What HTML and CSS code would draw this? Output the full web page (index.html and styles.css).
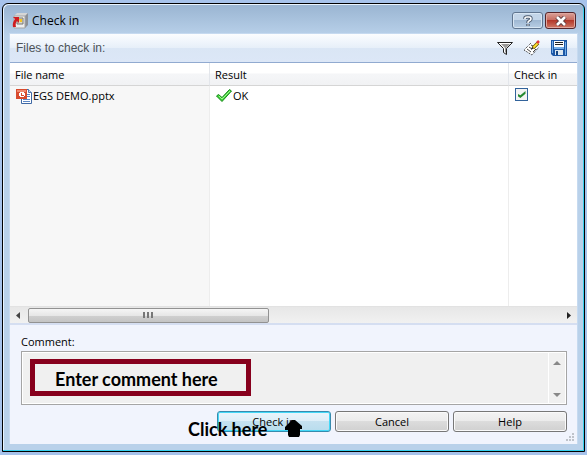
FILE: index.html
```html
<!DOCTYPE html>
<html lang="en">
<head>
<meta charset="utf-8">
<title>Check in</title>
<link rel="stylesheet" href="styles.css">
</head>
<body>
<main class="window">
  <header class="titlebar">
    <svg class="app-icon" width="16" height="16" viewBox="0 0 16 16" aria-hidden="true">
      <path d="M2 3L5 0H16L13 3Z" fill="#d6d6d6"/>
      <path d="M13 3L16 0V12L13 15Z" fill="#8c9097"/>
      <path d="M2 3H13V15H2Z" fill="#eee" stroke="#a5a5a5"/>
      <path d="M5 5H11V11H5Z" fill="#dcd8c8" stroke="#777"/>
      <path d="M7 6H10V9H8Z" fill="#f6c51c"/>
      <path d="M1 4H7V10L5 8Q3 10 4 14H1Q0 10 3 6Z" fill="#cf1d20"/>
    </svg>
    <h1 class="title">Check in</h1>
    <button class="caption-button" type="button" aria-label="Help">
      <svg width="10" height="12" viewBox="0 0 10 12"><path d="M2 4V3Q2 2 4 2H6Q8 2 8 4Q8 5 6 6Q5 6 5 8M5 9V11" fill="none" stroke="#4d5c70" stroke-width="3.400"/><path d="M2 4V3Q2 2 4 2H6Q8 2 8 4Q8 5 6 6Q5 6 5 8M5 9.500V10.500" fill="none" stroke="#fff" stroke-width="1.600"/></svg>
    </button>
    <button class="caption-button caption-close" type="button" aria-label="Close">
      <svg width="12" height="10" viewBox="0 0 12 10"><path d="M2 1L10 9M10 1L2 9" stroke="#5c3a3d" stroke-width="4.500"/><path d="M2 1L10 9M10 1L2 9" stroke="#fff" stroke-width="2.600"/></svg>
    </button>
  </header>
  <div class="client">
    <div class="toolbar">
      <span class="toolbar-label">Files to check in:</span>
      <button class="tool" type="button" aria-label="Filter">
        <svg width="16" height="16" viewBox="0 0 16 16"><path d="M0.500 2.500H15.500L9.500 8.500V14.500L6.500 12.500V8.500Z" fill="#fff" stroke="#222"/><path d="M4 4H13L9 8V13L8 12V8Z" fill="#999"/></svg>
      </button>
      <button class="tool" type="button" aria-label="Edit properties">
        <svg width="16" height="16" viewBox="0 0 16 16"><path d="M7 3L14 7L8 15L0 10Z" fill="#fff"/><path d="M7 3L0 10L8 15L15 7" fill="none" stroke="#222" stroke-dasharray="1 1"/><path d="M3 9L7 12M5 7L8 9M7 5L9 6M9 12L12 9" stroke="#444"/><path d="M9 8L14 3" stroke="#665000" stroke-width="3.400"/><path d="M9 8L14 3" stroke="#ffe32b" stroke-width="1.800"/><path d="M13 3L15 1" stroke="#e33737" stroke-width="2.500"/><path d="M8 7L7 10L10 8Z" fill="#222"/></svg>
      </button>
      <button class="tool" type="button" aria-label="Save">
        <svg width="16" height="16" viewBox="0 0 16 16"><path d="M0 0H16V16H2L0 14Z" fill="#1d57a5"/><path d="M1 1H2V13H1ZM14 2H15V15H14Z" fill="#75aee8"/><path d="M3 1H13V7H3Z" fill="#fff"/><path d="M4 2.500H12M4 4.500H12" stroke="#222"/><path d="M3 7H13V9H3Z" fill="#75aee8"/><path d="M4 10H12V15H4Z" fill="#dce7ef"/><path d="M5 11H7V15H5Z" fill="#174784"/></svg>
      </button>
    </div>
    <div class="list">
      <table class="files">
        <colgroup><col class="col-name"><col><col class="col-check"></colgroup>
        <thead><tr><th>File name</th><th>Result</th><th>Check in</th></tr></thead>
        <tbody>
          <tr class="file">
            <td><span class="cell"><svg width="16" height="16" viewBox="0 0 16 16" aria-hidden="true"><path d="M5.500 1.500H12.500L15.500 4.500V15.500H5.500Z" fill="#fff" stroke="#3f69a5"/><path d="M12.500 1.500V4.500H15.500" fill="#c8dcf3" stroke="#5277ad"/><path d="M10 6.500H14M10 8.500H14M7 11.500H14M7 13.500H14" stroke="#5c87c5"/><path d="M0 1H11V11H0Z" fill="#d84b2e"/><path d="M1 2H10V4H1Z" fill="#f08a70"/><path d="M4 4H8V5H9V8H8V9H4V8H3V5H4Z" fill="#fff"/><path d="M5 5H6V7H8V8H5Z" fill="#d84b2e"/></svg>EGS DEMO.pptx</span></td>
            <td><span class="cell"><svg width="16" height="16" viewBox="0 0 16 16" aria-hidden="true"><path d="M0.500 8L2.500 6.500L6 9.500L13.500 1.500L15.500 3L6 13.500Z" fill="#42d73b" stroke="#16861a"/><path d="M3 8L6 11L14 3" fill="none" stroke="#a1f58e"/></svg>OK</span></td>
            <td><input class="check" type="checkbox" checked aria-label="Check in EGS DEMO.pptx"></td>
          </tr>
          <tr><td></td><td></td><td></td></tr>
        </tbody>
      </table>
    </div>
    <div class="scrollbar" aria-hidden="true">
      <svg width="16" height="15" viewBox="0 0 16 15"><path d="M10 4V11L6 7.500Z" fill="#444"/></svg>
      <div class="track"><div class="thumb"><i></i><i></i><i></i></div></div>
      <svg width="16" height="15" viewBox="0 0 16 15"><path d="M6 4V11L10 7.500Z" fill="#222"/></svg>
    </div>
    <form class="footer">
      <label class="comment-label" for="comment">Comment:</label>
      <div class="comment-box">
        <textarea class="comment" id="comment"></textarea>
        <div class="vertical-scroll" aria-hidden="true">
          <svg width="8" height="4" viewBox="0 0 8 4"><path d="M4 0L8 4H0Z" fill="#888"/></svg>
          <svg width="8" height="4" viewBox="0 0 8 4"><path d="M0 0H8L4 4Z" fill="#888"/></svg>
        </div>
        <strong class="note note-comment">Enter comment here</strong>
      </div>
      <div class="actions">
        <div class="primary-action">
          <button class="button button-primary" type="button">Check in</button>
          <strong class="note note-click">Click here</strong>
          <svg class="pointer" width="20" height="18" viewBox="0 0 20 18" aria-hidden="true"><path d="M8 0H11L18 6V9H16V15L15 17H5L4 15V10H1V7Z" fill="#000"/></svg>
        </div>
        <button class="button" type="button">Cancel</button>
        <button class="button" type="button">Help</button>
      </div>
      <svg class="grip" width="10" height="10" viewBox="0 0 10 10" aria-hidden="true"><path d="M7 0H9V2H7ZM4 3H6V5H4ZM7 3H9V5H7ZM1 6H3V8H1ZM4 6H6V8H4ZM7 6H9V8H7Z" fill="#bfc3ca"/></svg>
    </form>
  </div>
</main>
</body>
</html>
```
FILE: styles.css
```css
* { box-sizing: border-box; }
body {
  margin: 0;
  padding: 3px 2px;
  height: 100vh;
  background: #a7c3eb;
  color: #000;
  font: 11px/16px "Open Sans", sans-serif;
}
button, textarea { font: inherit; color: inherit; }
svg { display: block; flex: none; }
.window {
  display: flex;
  flex-direction: column;
  height: 100%;
  padding: 0 6px 7px;
  border: 1px solid #000;
  border-radius: 6px 6px 0 0;
  background: linear-gradient(#99b4d1, #b9d1ea 32px);
  box-shadow: inset -1px -1px #35d0ee, inset 1px 1px #e8f4ff;
}
.titlebar {
  display: flex;
  align-items: center;
  height: 29px;
  padding: 4px 2px 0;
}
.app-icon { margin-left: 1px; }
.title {
  flex: 1;
  margin: 0 0 0 4px;
  font: 12px/16px "Open Sans", sans-serif;
}
.caption-button {
  display: grid;
  place-items: center;
  width: 31px;
  height: 17px;
  margin-left: 2px;
  padding: 0;
  border: 1px solid #60758f;
  border-radius: 3px;
  background: linear-gradient(#c3d5e8 50%, #9fb8d3 50%, #b8cee4);
  box-shadow: inset 0 0 0 1px #d8e6f3;
}
.caption-close {
  border-color: #55252a;
  background: linear-gradient(#d9a197, #c6695d 50%, #b3382a 50%, #cf7866);
  box-shadow: inset 0 0 0 1px #dfa79f;
}
.client {
  flex: 1;
  display: flex;
  flex-direction: column;
  min-height: 0;
  border: 1px solid #c6daf0;
  border-bottom: 0;
  background: #f1f4fd;
}
.toolbar {
  display: flex;
  align-items: center;
  gap: 11px;
  height: 29px;
  padding: 0 10px 0 6px;
  border-bottom: 1px solid #91aad0;
  background: linear-gradient(#fbfdff, #e6eff9 50%, #dae6f5 50%, #dce7f7);
}
.toolbar-label {
  flex: 1;
  color: #4d5257;
  font: 12px/16px "Liberation Sans", sans-serif;
}
.tool { padding: 0; border: 0; background: none; }
.list { flex: 1; min-height: 0; background: #fff; }
.files {
  width: 100%;
  height: 100%;
  border-collapse: separate;
  border-spacing: 0;
  table-layout: fixed;
}
.col-name { width: 200px; }
.col-check { width: 68px; }
th {
  height: 23px;
  padding: 2px 5px 0;
  border-right: 1px solid #e3e6eb;
  border-bottom: 1px solid #d5d5d5;
  background: linear-gradient(#fff 45%, #f5f6f8 50%, #f1f2f4);
  font-weight: normal;
  text-align: left;
}
td { padding: 0 5px; border-right: 1px solid #ededed; vertical-align: top; }
td:first-child { background: #f7f7f7; }
th:last-child, td:last-child { border-right: 0; }
.file { height: 20px; }
.file td { padding-top: 1px; }
.cell { display: flex; align-items: center; height: 18px; padding-left: 1px; gap: 1px; }
.check {
  appearance: none;
  display: grid;
  place-items: center;
  width: 13px;
  height: 13px;
  margin: 1px;
  border: 1px solid #32639b;
  background: #f4f4f4;
}
.check:checked::after {
  content: "";
  width: 8px;
  height: 7px;
  background: #258a31;
  clip-path: polygon(0 38%, 36% 60%, 100% 0, 100% 38%, 36% 100%, 0 70%);
}
.scrollbar {
  display: flex;
  align-items: center;
  height: 17px;
  border-top: 1px solid #e2e2e2;
  background: linear-gradient(#e7e7e7, #f1f1f1);
}
.track { flex: 1; }
.thumb {
  display: flex;
  justify-content: center;
  align-items: center;
  gap: 2px;
  width: 45%;
  height: 15px;
  margin-left: 2px;
  border: 1px solid #929292;
  border-radius: 2px;
  background: linear-gradient(#f5f5f5, #e7e7e7 50%, #cfcfcf 55%, #c4c4c4);
}
.thumb i { width: 2px; height: 6px; background: #777; }
.footer {
  position: relative;
  height: 121px;
  padding: 9px 10px 0 11px;
  border-top: 2px solid #d5def1;
  background: #f1f4fd;
}
.comment-label { display: block; height: 17px; }
.comment-box {
  position: relative;
  display: flex;
  height: 54px;
  padding: 1px;
  border: 1px solid #a5a5a5;
  background: #fff;
}
.comment { flex: 1; padding: 4px; border: 0; resize: none; background: #f0f0f0; }
.vertical-scroll {
  display: flex;
  flex-direction: column;
  justify-content: space-between;
  align-items: center;
  width: 17px;
  padding: 8px 0 6px;
  border-left: 1px solid #fff;
  background: #f0f0f0;
}
.note { position: absolute; font: bold 18px/20px Lato, sans-serif; white-space: nowrap; }
.note-comment {
  left: 8px;
  top: 7px;
  padding: 5px 28px 2px 20px;
  border: 5px solid #87001d;
}
.actions { display: flex; justify-content: flex-end; gap: 4px; margin-top: 6px; }
.primary-action { position: relative; }
.button {
  display: block;
  width: 114px;
  height: 21px;
  padding: 0;
  border: 1px solid #777;
  border-radius: 3px;
  background: linear-gradient(#f3f3f3, #ebebeb 50%, #dcdcdc 50%, #d0d0d0);
  box-shadow: inset 0 0 0 1px #fafafa;
}
.button-primary {
  border-color: #378bad;
  background: linear-gradient(#eaf5fb, #dceef8 50%, #c5e1f0 50%, #b8dced);
  box-shadow: inset 0 0 0 1px #43d8f7;
}
.note-click { left: -29px; top: 8px; }
.pointer { position: absolute; left: 67px; top: 9px; }
.grip { position: absolute; right: 2px; bottom: 1px; }
```
